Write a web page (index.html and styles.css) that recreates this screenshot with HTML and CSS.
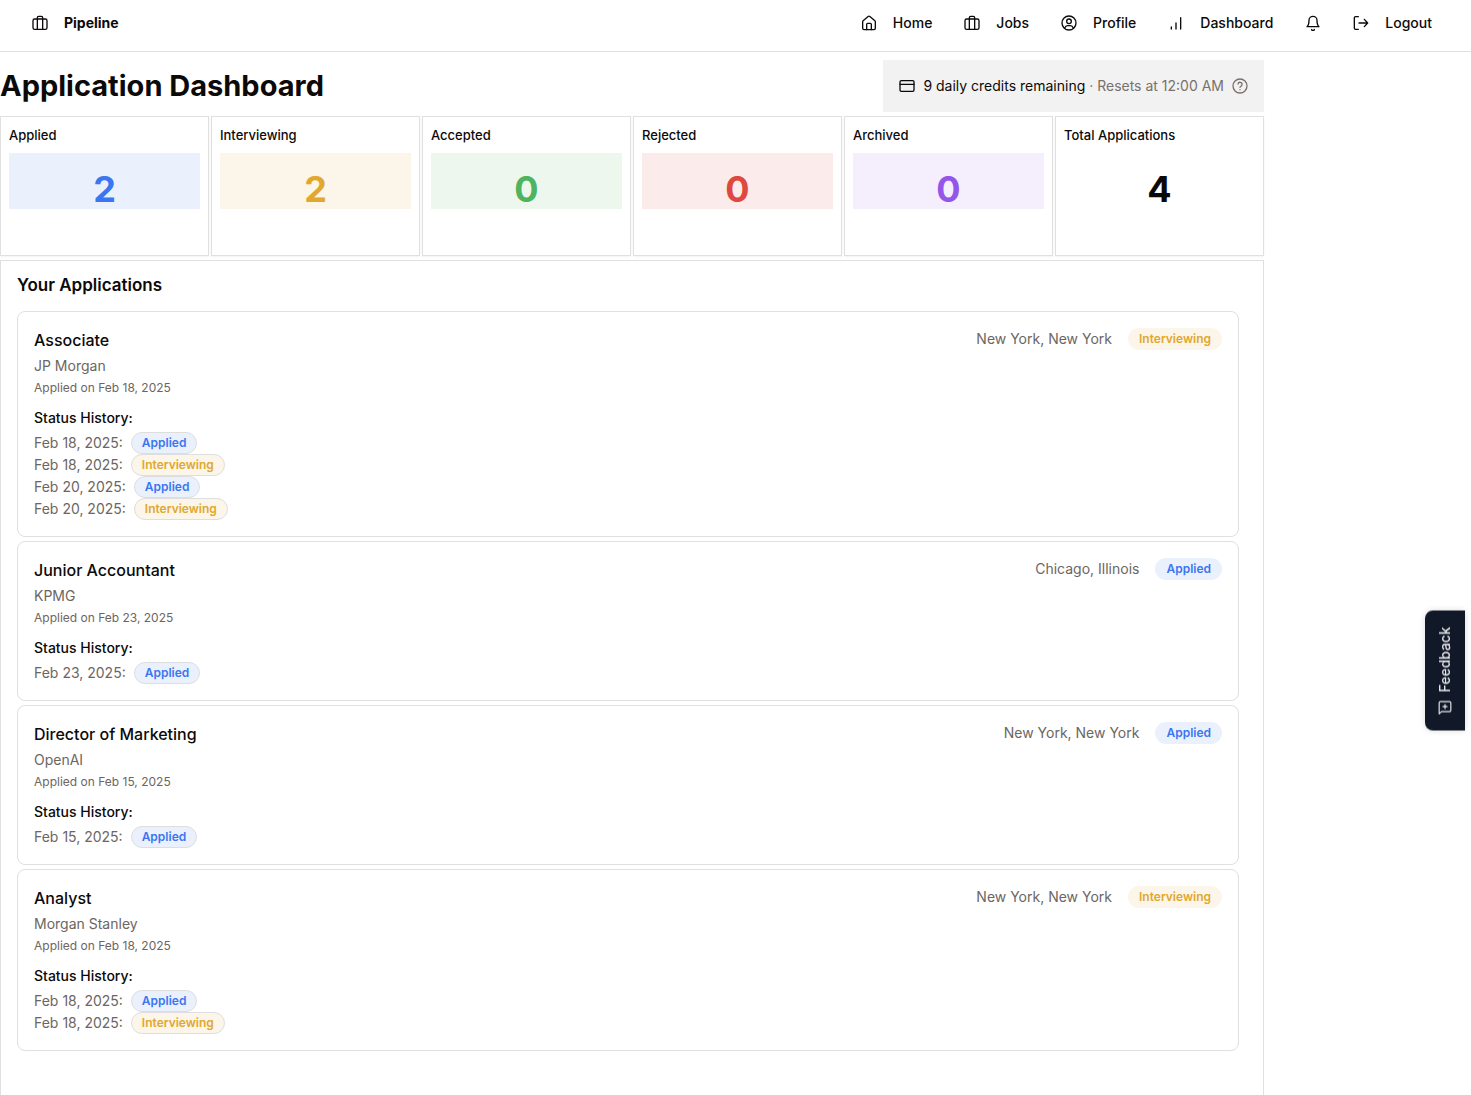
FILE: index.html
```html
<!DOCTYPE html>
<html lang="en">
<head>
<meta charset="utf-8">
<meta name="viewport" content="width=device-width, initial-scale=1">
<title>Pipeline - Application Dashboard</title>
<link rel="stylesheet" href="styles.css">
</head>
<body>
<header class="topbar">
  <a class="nav-link brand" href="#">
    <svg class="icon" viewBox="0 0 24 24"><rect x="1.5" y="6" width="21" height="15.500" rx="2.500"/><path d="M8 21.500V4a2 2 0 0 1 2-2h4a2 2 0 0 1 2 2v17.500"/></svg>
    <span>Pipeline</span>
  </a>
  <nav class="nav">
    <a class="nav-link" href="#">
      <svg class="icon" viewBox="0 0 24 24"><path d="M2.500 10a2 2 0 0 1 .7-1.500l7.500-6.200a2 2 0 0 1 2.600 0l7.500 6.200a2 2 0 0 1 .7 1.500v10a2 2 0 0 1-2 2h-15a2 2 0 0 1-2-2z"/><path d="M8.500 22v-8a1.500 1.500 0 0 1 1.500-1.500h4a1.500 1.500 0 0 1 1.500 1.500v8"/></svg>
      <span>Home</span>
    </a>
    <a class="nav-link" href="#">
      <svg class="icon" viewBox="0 0 24 24"><rect x="1.5" y="6" width="21" height="15.500" rx="2.500"/><path d="M8 21.500V4a2 2 0 0 1 2-2h4a2 2 0 0 1 2 2v17.500"/></svg>
      <span>Jobs</span>
    </a>
    <a class="nav-link" href="#">
      <svg class="icon" viewBox="0 0 24 24"><circle cx="12" cy="12" r="10.500"/><circle cx="12" cy="9.500" r="3.500"/><path d="M5.500 19.500c1-2.500 3-3.500 4.500-3.500h4c1.500 0 3.500 1 4.500 3.500"/></svg>
      <span>Profile</span>
    </a>
    <a class="nav-link" href="#">
      <svg class="icon" viewBox="0 0 24 24"><path d="M5 21v-3M12 21v-9M19 21V4"/></svg>
      <span>Dashboard</span>
    </a>
    <button class="nav-link" type="button" aria-label="Notifications">
      <svg class="icon" viewBox="0 0 24 24"><path d="M6 8a6 6 0 0 1 12 0c0 7 3 9.500 3 9.500H3S6 15 6 8"/><path d="M10 21.500a2 2 0 0 0 4 0"/></svg>
    </button>
    <button class="nav-link" type="button">
      <svg class="icon" viewBox="0 0 24 24"><path d="M8 21.500H4a2 2 0 0 1-2-2v-15a2 2 0 0 1 2-2h4"/><path d="m17 17.500 5-5.500-5-5.500M22 12H9"/></svg>
      <span>Logout</span>
    </button>
  </nav>
</header>

<main class="page">
  <div class="page-head">
    <h1 class="page-title">Application Dashboard</h1>
    <div class="credits">
      <svg class="icon" viewBox="0 0 24 24"><rect x="1.500" y="4" width="21" height="16" rx="2"/><path d="M1.500 9.500h21"/></svg>
      <p class="credits-text">9 daily credits remaining <span class="muted">· Resets at 12:00 AM</span></p>
      <button class="help" type="button" aria-label="About credits">
        <svg class="icon" viewBox="0 0 24 24"><circle cx="12" cy="12" r="10.500"/><path d="M9 9a3 3 0 0 1 6 1c0 2-3 2.500-3 4M12 17.500v.1"/></svg>
      </button>
    </div>
  </div>

  <section class="stats" aria-label="Totals">
    <article class="stat"><h2 class="stat-name">Applied</h2><p class="stat-value applied">2</p></article>
    <article class="stat"><h2 class="stat-name">Interviewing</h2><p class="stat-value interviewing">2</p></article>
    <article class="stat"><h2 class="stat-name">Accepted</h2><p class="stat-value accepted">0</p></article>
    <article class="stat"><h2 class="stat-name">Rejected</h2><p class="stat-value rejected">0</p></article>
    <article class="stat"><h2 class="stat-name">Archived</h2><p class="stat-value archived">0</p></article>
    <article class="stat"><h2 class="stat-name">Total Applications</h2><p class="stat-value">4</p></article>
  </section>

  <section class="panel">
    <h2 class="panel-title">Your Applications</h2>
    <div class="jobs">
      <article class="job">
        <div class="job-head">
          <div class="job-info">
            <h3 class="job-title">Associate</h3>
            <p class="company">JP Morgan</p>
            <p class="date">Applied on Feb 18, 2025</p>
          </div>
          <div class="job-side"><span class="place">New York, New York</span><span class="badge interviewing">Interviewing</span></div>
        </div>
        <h4 class="history-title">Status History:</h4>
        <ul class="history">
          <li><span>Feb 18, 2025:</span><span class="badge outlined applied">Applied</span></li>
          <li><span>Feb 18, 2025:</span><span class="badge outlined interviewing">Interviewing</span></li>
          <li><span>Feb 20, 2025:</span><span class="badge outlined applied">Applied</span></li>
          <li><span>Feb 20, 2025:</span><span class="badge outlined interviewing">Interviewing</span></li>
        </ul>
      </article>
      <article class="job">
        <div class="job-head">
          <div class="job-info">
            <h3 class="job-title">Junior Accountant</h3>
            <p class="company">KPMG</p>
            <p class="date">Applied on Feb 23, 2025</p>
          </div>
          <div class="job-side"><span class="place">Chicago, Illinois</span><span class="badge applied">Applied</span></div>
        </div>
        <h4 class="history-title">Status History:</h4>
        <ul class="history">
          <li><span>Feb 23, 2025:</span><span class="badge outlined applied">Applied</span></li>
        </ul>
      </article>
      <article class="job">
        <div class="job-head">
          <div class="job-info">
            <h3 class="job-title">Director of Marketing</h3>
            <p class="company">OpenAI</p>
            <p class="date">Applied on Feb 15, 2025</p>
          </div>
          <div class="job-side"><span class="place">New York, New York</span><span class="badge applied">Applied</span></div>
        </div>
        <h4 class="history-title">Status History:</h4>
        <ul class="history">
          <li><span>Feb 15, 2025:</span><span class="badge outlined applied">Applied</span></li>
        </ul>
      </article>
      <article class="job">
        <div class="job-head">
          <div class="job-info">
            <h3 class="job-title">Analyst</h3>
            <p class="company">Morgan Stanley</p>
            <p class="date">Applied on Feb 18, 2025</p>
          </div>
          <div class="job-side"><span class="place">New York, New York</span><span class="badge interviewing">Interviewing</span></div>
        </div>
        <h4 class="history-title">Status History:</h4>
        <ul class="history">
          <li><span>Feb 18, 2025:</span><span class="badge outlined applied">Applied</span></li>
          <li><span>Feb 18, 2025:</span><span class="badge outlined interviewing">Interviewing</span></li>
        </ul>
      </article>
    </div>
  </section>
</main>

<button class="feedback" type="button">
  <svg class="icon feedback-icon" viewBox="0 0 24 24"><path d="M2 23V4a2 2 0 0 1 2-2h16a2 2 0 0 1 2 2v13a2 2 0 0 1-2 2H6z"/><path d="M12 7v7M8.500 10.500h7"/></svg>
  <span>Feedback</span>
</button>
</body>
</html>
```

FILE: styles.css
```css
*, *::before, *::after { box-sizing: border-box; }

body {
  margin: 0;
  min-height: 100vh;
  display: flex;
  flex-direction: column;
  background: #fff;
  color: #0c0a09;
  font-family: Inter, "Liberation Sans", sans-serif;
  font-size: 14px;
  line-height: 20px;
}

h1, h2, h3, h4, p, ul { margin: 0; padding: 0; }
ul { list-style: none; }
button { font: inherit; color: inherit; background: none; border: 0; padding: 0; cursor: pointer; }

.icon {
  flex: none;
  width: 16px;
  height: 16px;
  fill: none;
  stroke: currentColor;
  stroke-width: 2;
  stroke-linecap: round;
  stroke-linejoin: round;
}

/* Top bar */
.topbar {
  display: flex;
  justify-content: space-between;
  align-items: center;
  padding: 8px 39px 14px 32px;
  min-height: 52px;
  border-bottom: 1px solid #e0e0e0;
}
.nav { display: flex; align-items: center; gap: 32px; }
.nav-link {
  display: flex;
  align-items: center;
  gap: 16px;
  color: inherit;
  font-weight: 500;
  text-decoration: none;
}
.brand { font-weight: 700; }

/* Page */
.page {
  flex: 1;
  display: flex;
  flex-direction: column;
  gap: 4px;
  width: 100%;
  max-width: 1264px;
  padding-top: 8px;
}
.page-head { display: flex; justify-content: space-between; align-items: center; }
.page-title { font-size: 29px; line-height: 36px; font-weight: 700; }
.credits { display: flex; align-items: center; gap: 8px; padding: 16px; background: #f2f2f2; }
.muted, .help { color: #78716c; }
.help { display: flex; }

/* Stats */
.stats { display: grid; grid-template-columns: repeat(6, 1fr); gap: 2px; }
.stat {
  min-height: 140px;
  padding: 8px;
  border: 1px solid #e0e0e0;
  box-shadow: 0 1px 2px rgba(0, 0, 0, .05);
}
.stat-name { font-size: 13px; line-height: 20px; font-weight: 500; }
.stat-value {
  margin-top: 8px;
  padding-top: 16px;
  font-size: 36px;
  line-height: 40px;
  font-weight: 700;
  text-align: center;
}

.applied { color: #3b76f0; background: #eaf1fd; }
.interviewing { color: #e0a82e; background: #fcf5e9; }
.accepted { color: #4fb45d; background: #edf7ee; }
.rejected { color: #de4840; background: #fbebea; }
.archived { color: #9455ea; background: #f4eefd; }

/* Applications */
.panel {
  flex: 1;
  padding: 10px 24px 40px 16px;
  border: 1px solid #e0e0e0;
  border-bottom: 0;
}
.panel-title { font-size: 17px; line-height: 28px; font-weight: 600; }
.jobs { display: grid; gap: 4px; margin-top: 12px; }
.job { padding: 16px; border: 1px solid #e0e0e0; border-radius: 8px; }
.job-head { display: flex; justify-content: space-between; align-items: flex-start; }
.job-title { font-size: 16px; line-height: 24px; font-weight: 500; }
.company { margin-top: 4px; color: #6c6661; }
.date { margin-top: 4px; font-size: 12px; line-height: 16px; color: #6c6661; }
.job-side { display: flex; align-items: center; gap: 16px; color: #6c6661; }
.badge {
  padding: 2px 10px;
  border: 1px solid transparent;
  border-radius: 11px;
  font-size: 12px;
  line-height: 16px;
  font-weight: 600;
}
.outlined { border-color: #dedede; }
.history-title { margin-top: 12px; font-size: 14px; line-height: 20px; font-weight: 500; }
.history { margin-top: 4px; color: #6c6661; }
.history li { display: flex; align-items: center; gap: 8px; }

/* Feedback tab, pinned over the page's right edge */
.feedback {
  position: fixed;
  right: 6px;
  top: 611px;
  display: flex;
  align-items: center;
  gap: 8px;
  padding: 16px 10px;
  writing-mode: vertical-rl;
  transform: rotate(180deg);
  border-radius: 0 8px 8px 0;
  background: #111827;
  color: #e5e7eb;
  font-weight: 500;
  box-shadow: 0 0 6px rgba(0, 0, 0, .15);
}
.feedback-icon { width: 14px; height: 14px; transform: rotate(180deg); }
```
